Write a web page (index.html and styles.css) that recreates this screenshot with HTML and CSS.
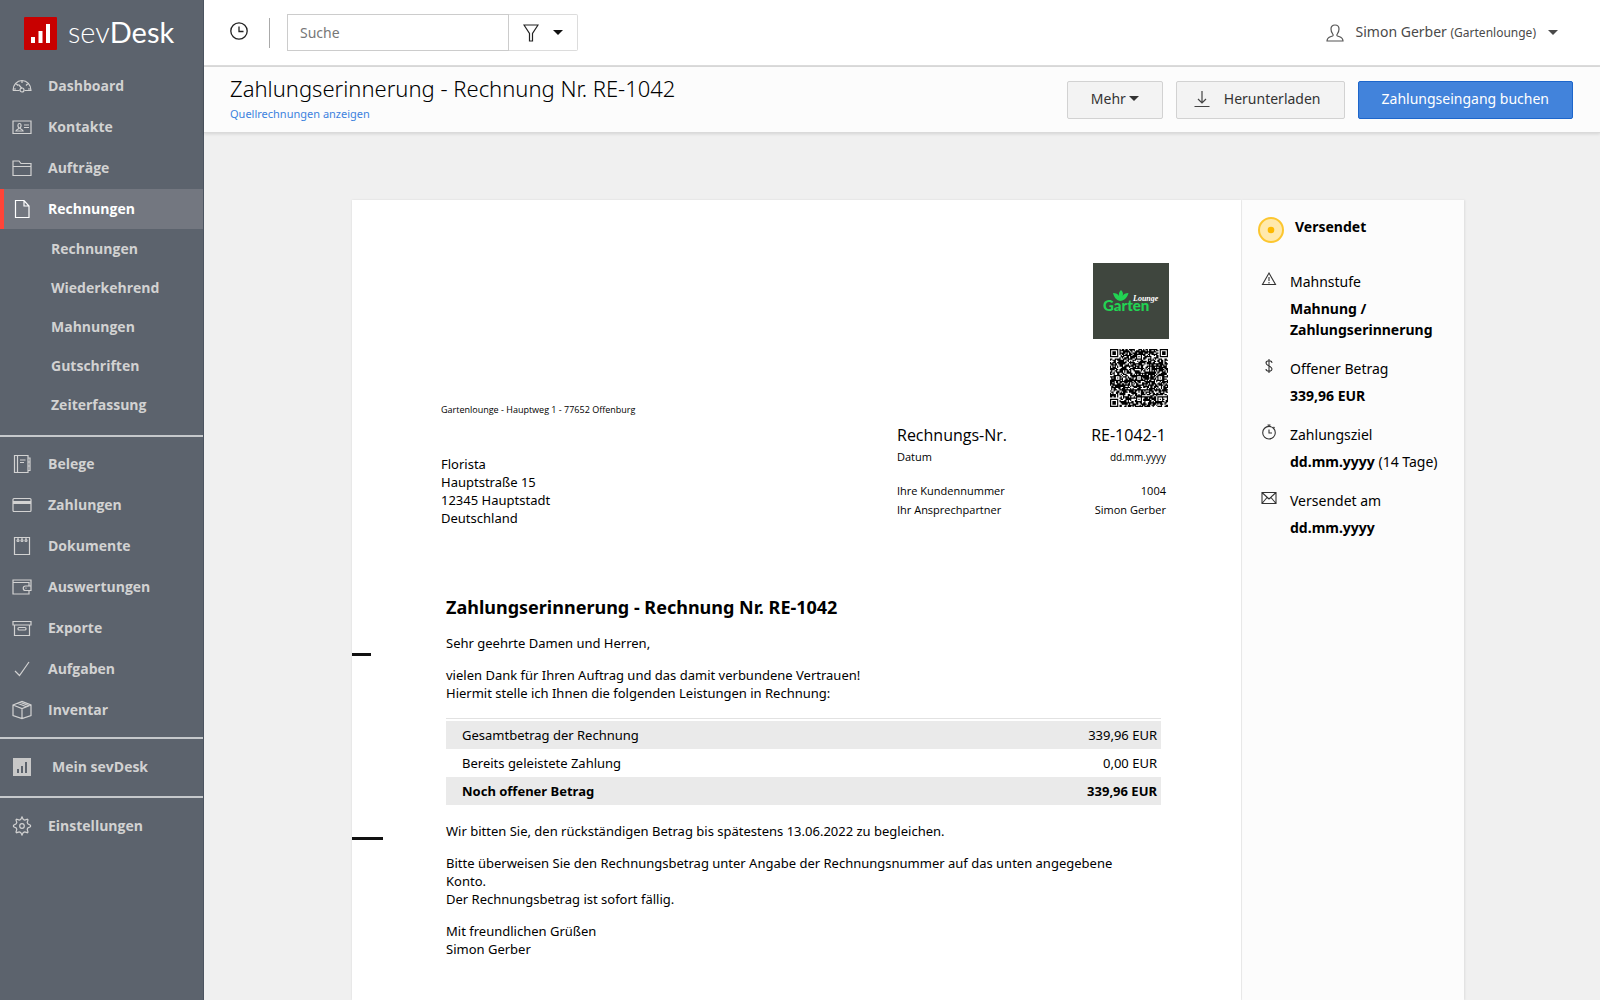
FILE: index.html
```html
<!DOCTYPE html>
<html lang="de">
<head>
<meta charset="utf-8">
<meta name="viewport" content="width=device-width, initial-scale=1">
<title>Zahlungserinnerung - Rechnung Nr. RE-1042</title>
<link rel="stylesheet" href="styles.css">
</head>
<body>
<div class="app">
  <aside class="sidebar">
    <a class="brand" href="#">
      <svg class="brand-mark" viewBox="0 0 33 33" aria-hidden="true"><rect width="33" height="33" rx="1" fill="#c80000"/><path d="M7 20h4v6H7zM14.500 14h4v12h-4zM22 7h4v19h-4z" fill="#fff"/></svg>
      <span class="brand-name">sev<b>Desk</b></span>
    </a>
    <nav class="nav">
      <ul class="nav-group">
        <li><a class="nav-item" href="#"><svg class="icon" viewBox="0 0 20 20"><path d="M1 14.500C1 9 5 4.500 10 4.500s9 4.500 9 10h-6.500M7.500 14.500H1M10 4.500v2.500M4 7.500l2 2M16 7.500l-2 2M1.500 13h2.500M18.500 13H16M6.500 8.500l3.500 4"/><circle cx="10" cy="14" r="2"/></svg>Dashboard</a></li>
        <li><a class="nav-item" href="#"><svg class="icon" viewBox="0 0 20 20"><path d="M1 4h18v12.500H1zM12 8h5M12 10.500h5M4 14c.5-2 3-1.500 3-3-1.500-1.500-1.500-4.500.5-4.500S9.500 9.500 8 11c0 1.500 2.500 1 3 3z"/></svg>Kontakte</a></li>
        <li><a class="nav-item" href="#"><svg class="icon" viewBox="0 0 20 20"><path d="M1 17.500V3h6l2 2.500h10v12zM1 8.500h18"/></svg>Aufträge</a></li>
        <li><a class="nav-item nav-item-active" href="#" aria-current="page"><svg class="icon" viewBox="0 0 20 20"><path d="M3.500 1.500h8.500l5 5.500v11.500H3.500zM12 1.500V7h5"/></svg>Rechnungen</a>
          <ul class="subnav">
            <li><a class="subnav-item" href="#">Rechnungen</a></li>
            <li><a class="subnav-item" href="#">Wiederkehrend</a></li>
            <li><a class="subnav-item" href="#">Mahnungen</a></li>
            <li><a class="subnav-item" href="#">Gutschriften</a></li>
            <li><a class="subnav-item" href="#">Zeiterfassung</a></li>
          </ul>
        </li>
      </ul>
      <ul class="nav-group">
        <li><a class="nav-item" href="#"><svg class="icon" viewBox="0 0 20 20"><path d="M2.500 1.500H16v17H2.500zM5.500 1.500v17M8 6h5.500M8 8.500h4M16 4h2v12.500h-2M16 8h2M16 12h2"/></svg>Belege</a></li>
        <li><a class="nav-item" href="#"><svg class="icon" viewBox="0 0 20 20"><rect x="1" y="3.500" width="18" height="13" rx="1"/><path d="M1 7.500h18" stroke-width="3"/></svg>Zahlungen</a></li>
        <li><a class="nav-item" href="#"><svg class="icon" viewBox="0 0 20 20"><path d="M2.500 1.500h15v17h-15z"/><path d="M6 1.500v2M10 1.500v2M14 1.500v2"/><circle cx="6" cy="4.500" r="1"/><circle cx="10" cy="4.500" r="1"/><circle cx="14" cy="4.500" r="1"/></svg>Dokumente</a></li>
        <li><a class="nav-item" href="#"><svg class="icon" viewBox="0 0 20 20"><path d="M17 13.500v3.500H1V3h18v3.500M1 5.500h16V9M19 6v7.500h-5.500a2 2 0 0 1 0-4.500H19M13.500 11.200h1"/></svg>Auswertungen</a></li>
        <li><a class="nav-item" href="#"><svg class="icon" viewBox="0 0 20 20"><path d="M1 3.500h18v3.500H1zM2.500 7v10.500h15V7"/><rect x="6" y="9.500" width="8" height="2.500" rx="1"/></svg>Exporte</a></li>
        <li><a class="nav-item" href="#"><svg class="icon" viewBox="0 0 20 20"><path d="M3 12l4.500 4.500L17 3"/></svg>Aufgaben</a></li>
        <li><a class="nav-item" href="#"><svg class="icon" viewBox="0 0 20 20"><path d="M1 5l9-3.500L19 5v10.500l-9 3-9-3zM1 5l9 3.500L19 5M10 8.500v10M5.500 3.300l9 3.500M8 2.300l9 3.500"/></svg>Inventar</a></li>
      </ul>
      <ul class="nav-group nav-group-single">
        <li><a class="nav-item nav-item-brand" href="#"><svg class="icon" viewBox="0 0 20 20"><path d="M1 1h18v18H1z" fill="#c8c8c8" stroke="none"/><path d="M5 12h2v4H5zM9 9h2v7H9zM13 5h2v11h-2z" fill="#5c636d" stroke="none"/></svg>Mein sevDesk</a></li>
      </ul>
      <ul class="nav-group nav-group-single">
        <li><a class="nav-item" href="#"><svg class="icon" viewBox="0 0 20 20"><path d="M8.700 3.500L10 1l1.300 2.500 1.400.5 2.700-.8.600.600-.8 2.700.6 1.400 2.700 1.400v1.400l-2.700 1.300-.6 1.400.8 2.700-.6.600-2.700-.8-1.400.6L10 19l-1.300-2.500-1.400-.6-2.700.8-.6-.6.8-2.700-.6-1.400L1.500 10.700V9.300l2.700-1.400.6-1.400L4 3.800l.6-.6 2.700.8z"/><circle cx="10" cy="10" r="2.300"/></svg>Einstellungen</a></li>
      </ul>
    </nav>
  </aside>

  <div class="workspace">
    <header class="topbar">
      <button class="icon-button" type="button" aria-label="Verlauf"><svg class="icon-history" viewBox="0 0 18 18"><circle cx="9" cy="9" r="8.200"/><path d="M9 4.500v5h4.500"/></svg></button>
      <span class="topbar-rule"></span>
      <form class="search">
        <input class="search-input" type="search" placeholder="Suche" aria-label="Suche">
        <button class="search-filter" type="button" aria-label="Filter"><svg class="icon-filter" viewBox="0 0 16 18"><path d="M1 1h14L9.500 9.500v7.500h-3V9.500z"/></svg><span class="caret"></span></button>
      </form>
      <button class="user" type="button">
        <svg class="icon-user" viewBox="0 0 18 18"><path d="M1 17c0-4 3-4 5.500-5 .8-.4.8-1 .2-2C5.500 8.500 5 7 5 5c0-2.500 1.500-4 4-4s4 1.500 4 4c0 2-.5 3.500-1.700 5-.6 1-.6 1.600.2 2C14 13 17 13 17 17z"/></svg>
        <span>Simon Gerber <small class="user-company">(Gartenlounge)</small></span><span class="caret"></span>
      </button>
    </header>

    <section class="titlebar">
      <div class="titlebar-text">
        <h1 class="page-title">Zahlungserinnerung - Rechnung Nr. RE-1042</h1>
        <a class="source-link" href="#">Quellrechnungen anzeigen</a>
      </div>
      <div class="actions">
        <button class="button button-menu" type="button">Mehr<span class="caret"></span></button>
        <button class="button button-download" type="button"><svg class="icon-download" viewBox="0 0 16 16"><path d="M8 0v11.500M4 8l4 4 4-4M0.500 15.500h15"/></svg>Herunterladen</button>
        <button class="button button-primary" type="button">Zahlungseingang buchen</button>
      </div>
    </section>

    <main class="content">
      <article class="paper">
        <span class="fold-mark fold-mark-top"></span>
        <span class="fold-mark fold-mark-middle"></span>
        <div class="letterhead">
          <div class="recipient">
            <p class="sender">Gartenlounge - Hauptweg 1 - 77652 Offenburg</p>
            <address class="address">Florista<br>Hauptstraße 15<br>12345 Hauptstadt<br>Deutschland</address>
          </div>
          <div class="reference">
            <svg class="company-logo" viewBox="0 0 76 76" role="img" aria-label="Garten Lounge">
              <rect width="76" height="76" fill="#3f463e"/>
              <path d="M27 38c-4-1-6-4-7-8 3 0 5 1 6 3-.500-2 0-4 2-6 2 2 2.500 4 1.500 6 1-2 3-3 6-3-1 4-4 8-8.500 8z" fill="#22d353"/>
              <text class="logo-garten" x="10" y="48">Garten</text>
              <text class="logo-lounge" x="40" y="38">Lounge</text>
            </svg>
            <svg class="qr" id="qr" viewBox="0 0 49 49" role="img" aria-label="QR-Code"><path fill="#000"/></svg>
            <dl class="meta">
              <div class="meta-row meta-row-main"><dt>Rechnungs-Nr.</dt><dd>RE-1042-1</dd></div>
              <div class="meta-row"><dt>Datum</dt><dd class="meta-date">dd.mm.yyyy</dd></div>
              <div class="meta-row meta-row-spaced"><dt>Ihre Kundennummer</dt><dd>1004</dd></div>
              <div class="meta-row"><dt>Ihr Ansprechpartner</dt><dd>Simon Gerber</dd></div>
            </dl>
          </div>
        </div>
        <div class="letter">
          <h2 class="letter-title">Zahlungserinnerung - Rechnung Nr. RE-1042</h2>
          <p>Sehr geehrte Damen und Herren,</p>
          <p>vielen Dank für Ihren Auftrag und das damit verbundene Vertrauen!<br>Hiermit stelle ich Ihnen die folgenden Leistungen in Rechnung:</p>
          <table class="totals">
            <tbody>
              <tr><th scope="row">Gesamtbetrag der Rechnung</th><td>339,96 EUR</td></tr>
              <tr><th scope="row">Bereits geleistete Zahlung</th><td>0,00 EUR</td></tr>
              <tr class="totals-open"><th scope="row">Noch offener Betrag</th><td>339,96 EUR</td></tr>
            </tbody>
          </table>
          <p>Wir bitten Sie, den rückständigen Betrag bis spätestens 13.06.2022 zu begleichen.</p>
          <p>Bitte überweisen Sie den Rechnungsbetrag unter Angabe der Rechnungsnummer auf das unten angegebene<br>Konto.<br>Der Rechnungsbetrag ist sofort fällig.</p>
          <p>Mit freundlichen Grüßen<br>Simon Gerber</p>
        </div>
      </article>

      <aside class="details">
        <div class="status"><svg class="status-dot" viewBox="0 0 26 26" aria-hidden="true"><circle cx="13" cy="13" r="12" fill="#ffe9ac" stroke="#fcc62f" stroke-width="2"/><circle cx="13" cy="13" r="3.300" fill="#fdb900"/></svg><strong>Versendet</strong></div>
        <dl class="facts">
          <div class="fact">
            <svg class="fact-icon" viewBox="0 0 16 16"><path d="M8 2L14.500 13.500h-13zM8 6v4M8 11v1.500"/></svg>
            <dt>Mahnstufe</dt><dd><strong>Mahnung / Zahlungserinnerung</strong></dd>
          </div>
          <div class="fact">
            <svg class="fact-icon" viewBox="0 0 16 16"><path d="M8 1v14M11 5c0-3-6-3-6 0s6 3 6 6-6 3-6 0"/></svg>
            <dt>Offener Betrag</dt><dd><strong>339,96 EUR</strong></dd>
          </div>
          <div class="fact">
            <svg class="fact-icon" viewBox="0 0 16 16"><circle cx="8" cy="8.700" r="6.300"/><path d="M6.500 1h3M8 1v1.500M12.500 3l1 1M8 5.500V9h3"/></svg>
            <dt>Zahlungsziel</dt><dd><strong>dd.mm.yyyy</strong> (14 Tage)</dd>
          </div>
          <div class="fact">
            <svg class="fact-icon" viewBox="0 0 16 16"><path d="M1 2.500h14v11H1zM1 2.500l7 6.500 7-6.500M1 13.500l5-6M15 13.500l-5-6"/></svg>
            <dt>Versendet am</dt><dd><strong>dd.mm.yyyy</strong></dd>
          </div>
        </dl>
      </aside>
    </main>
  </div>
</div>
<script src="qr.js"></script>
</body>
</html>
```
FILE: styles.css
```css
* { box-sizing: border-box; }

body {
  margin: 0;
  background: #f0f0f0;
  color: #000;
  font-family: "Noto Sans", "Open Sans", sans-serif;
  font-size: 14px;
  line-height: 18px;
}

h1, h2, p, ul, dl, dd { margin: 0; padding: 0; }
ul { list-style: none; }
a { text-decoration: none; }
button, input { font: inherit; }
button { cursor: pointer; }
svg { flex: none; display: block; fill: none; }

.app {
  display: grid;
  grid-template-columns: 204px 1fr;
  min-height: 100vh;
}

/* Sidebar */
.sidebar {
  background: #5c636d;
  border-right: 1px solid #4c5460;
}
.brand {
  display: flex;
  align-items: center;
  gap: 11px;
  height: 66px;
  padding-left: 24px;
  color: #fff;
}
.brand-mark { width: 33px; height: 33px; }
.brand-name {
  padding-bottom: 2px;
  font-family: Lato, sans-serif;
  font-size: 29px;
  font-weight: 300;
  line-height: 32px;
}
.brand-name b { font-weight: 400; }

.nav {
  color: #d2d2d2;
  font-family: "Open Sans", sans-serif;
  font-weight: 700;
}
.nav-group {
  display: grid;
  gap: 1px;
  padding-bottom: 7px;
}
.nav-group:first-child { padding-bottom: 11px; }
.nav-group + .nav-group {
  padding-top: 7px;
  border-top: 2px solid #c6c9cc;
}
.nav-group + .nav-group-single { padding: 8px 0 9px; }
.nav-item {
  display: flex;
  align-items: center;
  gap: 16px;
  height: 40px;
  padding-left: 12px;
  color: inherit;
}
.nav-item-brand { gap: 20px; }
.nav-item-active {
  padding-left: 8px;
  border-left: 4px solid #ff4438;
  background: #737780;
  color: #fff;
}
.icon {
  width: 20px;
  height: 20px;
  stroke: currentColor;
  stroke-width: 1.2;
}
.subnav-item {
  display: block;
  height: 39px;
  padding-left: 51px;
  color: inherit;
  line-height: 39px;
}

/* Top bar */
.workspace {
  display: flex;
  flex-direction: column;
  min-width: 0;
}
.topbar {
  display: flex;
  align-items: center;
  height: 67px;
  padding: 0 42px 0 26px;
  background: #fff;
  border-bottom: 2px solid #dcdcdc;
}
.icon-button {
  padding: 0 0 4px;
  border: 0;
  background: none;
}
.icon-history { width: 18px; height: 18px; stroke: #222; stroke-width: 1.3; }
.topbar-rule {
  width: 1px;
  height: 30px;
  margin: 0 17px 0 21px;
  background: #aaa;
}
.search { display: flex; height: 37px; }
.search-input {
  width: 222px;
  padding: 0 12px;
  border: 1px solid #ccc;
  outline: 0;
  background: #fff;
  color: #333;
}
.search-input::placeholder { color: #777; opacity: 1; }
.search-filter {
  display: flex;
  align-items: center;
  gap: 14px;
  width: 69px;
  padding: 0 0 0 14px;
  border: 1px solid #dcdcdc;
  border-left: 0;
  border-radius: 0 2px 2px 0;
  background: #fff;
  color: #111;
}
.icon-filter { width: 16px; height: 18px; stroke: #222; stroke-width: 1.2; }
.caret {
  width: 0;
  height: 0;
  border: 5px solid transparent;
  border-top-color: currentColor;
  border-bottom: 0;
}
.user {
  display: flex;
  align-items: center;
  gap: 12px;
  margin-left: auto;
  padding: 0;
  border: 0;
  background: none;
  color: #4a4a4a;
}
.user-company { font-size: 12px; }
.icon-user { width: 18px; height: 18px; stroke: #555; stroke-width: 1.2; }

/* Title bar */
.titlebar {
  display: flex;
  align-items: center;
  justify-content: space-between;
  height: 66px;
  padding: 0 27px 0 26px;
  background: #fcfcfc;
  border-bottom: 1px solid #dadada;
  box-shadow: 0 1px 3px rgba(0, 0, 0, 0.12);
}
.page-title {
  font-size: 22px;
  font-weight: 300;
  line-height: 28px;
}
.source-link {
  display: block;
  color: #3c82de;
  font-size: 11px;
  line-height: 24px;
}
.actions { display: flex; gap: 13px; }
.button {
  display: flex;
  align-items: center;
  justify-content: center;
  height: 38px;
  padding: 0 23px 2px;
  border: 1px solid #d2d2d2;
  border-radius: 2px;
  background: #f3f3f3;
  color: #333;
}
.button-menu { gap: 3px; }
.button-download { gap: 14px; padding-left: 17px; }
.icon-download { width: 16px; height: 16px; stroke: #444; stroke-width: 1.2; }
.button-primary {
  border-color: #1d66cb;
  background: #4283db;
  color: #fff;
}

/* Document and details */
.content {
  display: grid;
  grid-template-columns: 1fr 223px;
  flex: 1;
  padding: 67px 136px 0 148px;
}
.paper {
  position: relative;
  padding: 63px 72px 40px 89px;
  background: #fff;
  box-shadow: 0 0 2px rgba(0, 0, 0, 0.1);
  font-size: 13px;
}
.fold-mark {
  position: absolute;
  left: 0;
  height: 3px;
  background: #111;
}
.fold-mark-top { top: 453px; width: 19px; }
.fold-mark-middle { top: 637px; width: 31px; }

.letterhead {
  display: flex;
  justify-content: space-between;
}
.recipient { padding-top: 140px; }
.sender {
  font-family: "Open Sans", sans-serif;
  font-size: 9px;
  line-height: 14px;
}
.address { margin-top: 38px; font-style: normal; }
.reference {
  display: flex;
  flex-direction: column;
  align-items: flex-end;
  width: 272px;
}
.company-logo { width: 76px; height: 76px; }
.logo-garten {
  fill: #22d353;
  font-family: Lato, sans-serif;
  font-size: 15px;
  font-weight: 900;
}
.logo-lounge {
  fill: #fff;
  font-family: "Liberation Serif", serif;
  font-size: 8px;
  font-style: italic;
  font-weight: 700;
}
.qr { width: 58px; height: 58px; margin: 10px 1px 0 0; }
.meta {
  display: grid;
  gap: 1px;
  align-self: stretch;
  margin: 16px 3px 0 0;
  font-family: "Open Sans", sans-serif;
  font-size: 11px;
}
.meta-row { display: flex; justify-content: space-between; }
.meta-row-main { font-size: 16px; line-height: 24px; }
.meta-row-spaced { margin-top: 15px; }
.meta-date { font-size: 10px; }

.letter {
  display: flow-root;
  margin: 0 8px 0 5px;
}
.letter-title {
  margin-top: 67px;
  font-size: 18px;
  font-weight: 700;
  line-height: 26px;
}
.letter p { margin-top: 14px; }
.totals {
  width: 100%;
  margin: 16px 0 17px;
  border-collapse: separate;
  border-spacing: 0;
  border-top: 1px solid #e2e2e2;
  padding-top: 2px;
}
.totals th,
.totals td { height: 28px; padding: 0 4px 0 16px; font-weight: 400; }
.totals th { text-align: left; }
.totals td { text-align: right; }
.totals tr:nth-child(odd) { background: #eaeaea; }
.totals .totals-open th,
.totals .totals-open td { font-weight: 700; }

.details {
  padding: 17px 16px;
  border-left: 1px solid #f0f0f0;
  background: #fcfcfc;
  box-shadow: 1px 0 2px rgba(0, 0, 0, 0.08);
}
.status {
  display: flex;
  gap: 11px;
  line-height: 20px;
}
.status-dot { width: 26px; height: 26px; }
.facts { margin-top: 28px; }
.fact {
  display: grid;
  grid-template-columns: 16px 1fr;
  column-gap: 13px;
  margin: 0 0 18px 3px;
}
.fact-icon { width: 16px; height: 16px; stroke: #333; stroke-width: 1.1; }
.fact dt { line-height: 21px; }
.fact dd { grid-column: 2; margin-top: 6px; line-height: 21px; }
```
FILE: qr.js
```js
// Draws the payment code: finder and alignment patterns plus data modules.
const size = 49;
const centers = [6, 24, 42];
let seed = 1042;

function nextBit() {
  seed = (seed * 1103515245 + 12345) % 2147483648;
  return seed / 2147483648 > 0.32;
}

function ring(x, y, cx, cy, reach) {
  const d = Math.max(Math.abs(x - cx), Math.abs(y - cy));
  return d <= reach ? d : -1;
}

function isDark(x, y) {
  const data = nextBit();
  for (const [cx, cy] of [[3, 3], [size - 4, 3], [3, size - 4]]) {
    const d = ring(x, y, cx, cy, 4);
    if (d >= 0) return d !== 2 && d !== 4;
  }
  for (const cx of centers) {
    for (const cy of centers) {
      const corner = (cx === 6 && cy !== 24) || (cy === 6 && cx !== 24);
      const d = ring(x, y, cx, cy, 2);
      if (!corner && d >= 0) return d !== 1;
    }
  }
  return data;
}

let path = "";
for (let y = 0; y < size; y++) {
  for (let x = 0; x < size; x++) {
    if (isDark(x, y)) path += `M${x} ${y}h1v1h-1z`;
  }
}
document.querySelector("#qr path").setAttribute("d", path);
```
